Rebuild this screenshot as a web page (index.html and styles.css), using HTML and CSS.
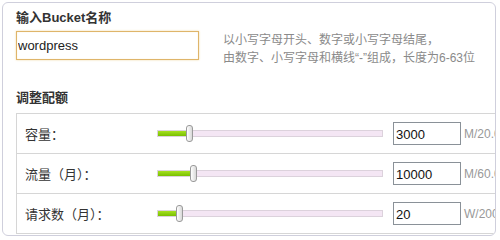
FILE: index.html
```html
<!DOCTYPE html>
<html lang="zh-CN">
<head>
  <meta charset="UTF-8">
  <title>创建Bucket</title>
  <link rel="stylesheet" href="styles.css">
</head>
<body>

<div class="panel">
  <h3 class="section-title">输入Bucket名称</h3>
  <div class="name-row">
    <input class="bucket-input" value="wordpress">
    <div class="hint">
      以小写字母开头、数字或小写字母结尾，<br>
      由数字、小写字母和横线“-”组成，长度为6-63位
    </div>
  </div>

  <h3 class="section-title quota-title">调整配额</h3>
  <div class="quota-table">
    <div class="quota-row">
      <span class="quota-label">容量：</span>
      <div class="slider">
        <div class="slider-fill" style="width: 31px;"></div>
        <div class="slider-thumb" style="left: 32px;"></div>
      </div>
      <input class="quota-input" value="3000">
      <span class="quota-unit">M/20.00G</span>
    </div>
    <div class="quota-row">
      <span class="quota-label">流量（月）：</span>
      <div class="slider">
        <div class="slider-fill" style="width: 35px;"></div>
        <div class="slider-thumb" style="left: 36px;"></div>
      </div>
      <input class="quota-input" value="10000">
      <span class="quota-unit">M/60.00G</span>
    </div>
    <div class="quota-row">
      <span class="quota-label">请求数（月）：</span>
      <div class="slider">
        <div class="slider-fill" style="width: 21px;"></div>
        <div class="slider-thumb" style="left: 22px;"></div>
      </div>
      <input class="quota-input" value="20">
      <span class="quota-unit">W/200W</span>
    </div>
  </div>
</div>

</body>
</html>
```

FILE: styles.css
```css
body {
  margin: 0;
  background: #fff;
  font-family: "Liberation Sans", "Noto Sans CJK SC", sans-serif;
  color: #333;
}
.panel {
  box-sizing: border-box;
  width: 494px;
  height: 234px;
  margin: 2px 0 0 2px;
  padding: 7px 0 0 13px;
  border: 1px solid #cfcfdc;
  border-radius: 6px;
  overflow: hidden;
}
.section-title {
  margin: 0;
  font-size: 13px;
  line-height: 16px;
  font-weight: bold;
  color: #333;
}
.name-row {
  display: flex;
  align-items: flex-start;
  margin-top: 5px;
}
.bucket-input {
  box-sizing: border-box;
  width: 183px;
  height: 29px;
  padding: 0 1px;
  border: 1px solid #dfb56a;
  box-shadow: inset 0 0 1px #f0d9a8, 0 0 2px #f0d9a8;
  font-family: "Liberation Sans", sans-serif;
  font-size: 13px;
  color: #222;
  outline: none;
}
.hint {
  margin-left: 24px;
  font-size: 12px;
  line-height: 18px;
  color: #8a8a8a;
}
.quota-title {
  margin-top: 23px;
}
.quota-table {
  width: 520px;
  margin-top: 7px;
  border: 1px solid #d6d6d6;
  border-bottom: none;
}
.quota-row {
  box-sizing: border-box;
  display: flex;
  align-items: center;
  height: 40px;
  padding-left: 8px;
  border-bottom: 1px solid #d6d6d6;
}
.quota-label {
  width: 132px;
  font-size: 13px;
  color: #333;
}
.slider {
  position: relative;
  box-sizing: border-box;
  width: 226px;
  height: 7px;
  background: #f4e6f4;
  border: 1px solid #dcd2dc;
}
.slider-fill {
  height: 100%;
  background: linear-gradient(#a6e020, #78c000);
}
.slider-thumb {
  position: absolute;
  top: -6px;
  box-sizing: border-box;
  width: 7px;
  height: 17px;
  margin-left: -4px;
  border: 1px solid #9a9a9a;
  border-radius: 3px;
  background: linear-gradient(90deg, #fff, #d8d8d8);
}
.quota-input {
  box-sizing: border-box;
  width: 68px;
  height: 23px;
  margin-left: 10px;
  padding: 1px 2px 0;
  border: 1px solid #8a9198;
  font-family: "Liberation Sans", sans-serif;
  font-size: 13px;
  color: #111;
  outline: none;
}
.quota-unit {
  margin-left: 3px;
  font-size: 12px;
  color: #999;
}
```
